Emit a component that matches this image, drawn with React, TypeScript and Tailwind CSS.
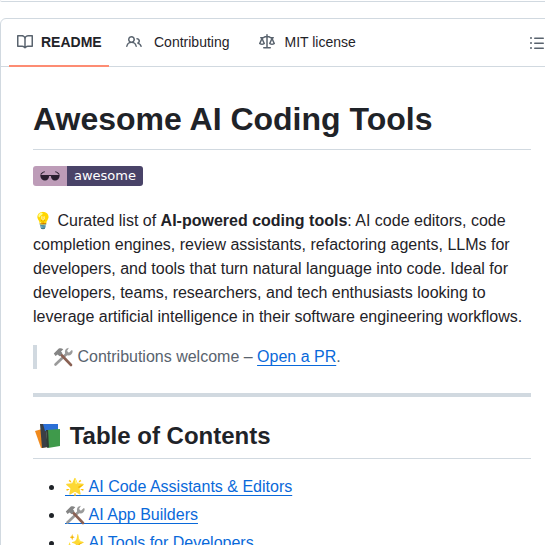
const tabs = [
  {
    label: "README",
    className: "w-[100px] gap-2 border-[#fd8c73] px-2 font-bold",
    path: "M0 1.75A.75.75 0 0 1 .75 1h4.253c1.227 0 2.317.59 3 1.501A3.743 3.743 0 0 1 11.006 1h4.245a.75.75 0 0 1 .75.75v10.5a.75.75 0 0 1-.75.75h-4.507a2.25 2.25 0 0 0-1.591.659l-.622.621a.75.75 0 0 1-1.06 0l-.622-.621A2.25 2.25 0 0 0 5.258 13H.75a.75.75 0 0 1-.75-.75Zm7.251 10.324.004-5.073-.002-2.253A2.25 2.25 0 0 0 5.003 2.5H1.5v9h3.757a3.75 3.75 0 0 1 1.994.574ZM8.755 4.75l-.004 7.322a3.752 3.752 0 0 1 1.992-.572H14.5v-9h-3.495a2.25 2.25 0 0 0-2.25 2.25Z",
  },
  {
    label: "Contributing",
    className: "ml-[17px] gap-3 border-transparent",
    path: "M2 5.5a3.5 3.5 0 1 1 5.898 2.549 5.508 5.508 0 0 1 3.034 4.084.75.75 0 1 1-1.482.235 4 4 0 0 0-7.9 0 .75.75 0 0 1-1.482-.236A5.507 5.507 0 0 1 3.102 8.05 3.493 3.493 0 0 1 2 5.5ZM11 4a3.001 3.001 0 0 1 2.22 5.018 5.01 5.01 0 0 1 2.56 3.012.749.749 0 0 1-.885.954.752.752 0 0 1-.549-.514 3.507 3.507 0 0 0-2.522-2.372.75.75 0 0 1-.574-.73v-.352a.75.75 0 0 1 .416-.672A1.5 1.5 0 0 0 11 5.5.75.75 0 0 1 11 4Zm-5.5-.5a2 2 0 1 0-.001 3.999A2 2 0 0 0 5.5 3.5Z",
  },
  {
    label: "MIT license",
    className: "ml-[29px] gap-2.5 border-transparent",
    path: "M8.75.75V2h.985c.304 0 .603.08.867.231l1.29.736c.038.022.08.033.124.033h2.234a.75.75 0 0 1 0 1.5h-.427l2.111 4.692a.75.75 0 0 1-.154.838l-.53-.53.529.531-.001.002-.002.002-.006.006-.006.005-.01.01-.045.04c-.21.176-.441.327-.686.45C14.556 10.78 13.88 11 13 11a4.498 4.498 0 0 1-2.023-.454 3.544 3.544 0 0 1-.686-.45l-.045-.04-.016-.015-.006-.006-.004-.004v-.001a.75.75 0 0 1-.154-.838L12.178 4.5h-.162c-.305 0-.604-.079-.868-.231l-1.29-.736a.245.245 0 0 0-.124-.033H8.75V13h2.5a.75.75 0 0 1 0 1.5h-6.5a.75.75 0 0 1 0-1.5h2.5V3.5h-.984a.245.245 0 0 0-.124.033l-1.289.737c-.265.15-.564.23-.869.23h-.162l2.112 4.692a.75.75 0 0 1-.154.838l-.53-.53.529.531-.001.002-.002.002-.006.006-.016.015-.045.04c-.21.176-.441.327-.686.45C4.556 10.78 3.88 11 3 11a4.498 4.498 0 0 1-2.023-.454 3.544 3.544 0 0 1-.686-.45l-.045-.04-.016-.015-.006-.006-.004-.004v-.001a.75.75 0 0 1-.154-.838L2.178 4.5H1.75a.75.75 0 0 1 0-1.5h2.234a.249.249 0 0 0 .125-.033l1.288-.737c.265-.15.564-.23.869-.23h.984V.75a.75.75 0 0 1 1.5 0Zm2.945 8.477c.285.135.718.273 1.305.273s1.02-.138 1.305-.273L13 6.327Zm-10 0c.285.135.718.273 1.305.273s1.02-.138 1.305-.273L3 6.327Z",
  },
];

const listPath =
  "M5.75 2.5h8.5a.75.75 0 0 1 0 1.5h-8.5a.75.75 0 0 1 0-1.5Zm0 5h8.5a.75.75 0 0 1 0 1.5h-8.5a.75.75 0 0 1 0-1.5Zm0 5h8.5a.75.75 0 0 1 0 1.5h-8.5a.75.75 0 0 1 0-1.5ZM2 14a1 1 0 1 1 0-2 1 1 0 0 1 0 2Zm1-6a1 1 0 1 1-2 0 1 1 0 0 1 2 0ZM2 4a1 1 0 1 1 0-2 1 1 0 0 1 0 2Z";

const Icon = ({ d }: { d: string }) => (
  <svg viewBox="0 0 16 16" width="16" height="16" fill="#59636e" className="shrink-0">
    <path d={d} />
  </svg>
);

// the system emoji differ from the reference, so the glyph stays as text and the drawing sits over it
const ToolsEmoji = () => (
  <span className="relative text-transparent">
    🛠️
    <svg viewBox="0 0 20 20" width="20" height="20" className="absolute top-1/2 left-0 -translate-y-1/2">
      <path d="M2.500 17.500 14 6.500" stroke="#9a9a9a" strokeWidth="2.600" strokeLinecap="round" />
      <path d="M19.500 3.500c.6 2.600-1.400 5-4 5-2.400 0-4-2-3.500-4.500.3-1.500 1.700-3 3.900-3.200L14 4l1.900 1.700 2.900-2.600Z" fill="#9a9a9a" />
      <path d="M7 6.500 18 18" stroke="#8a6154" strokeWidth="2.600" strokeLinecap="round" />
      <path d="M.8 6.500 5.800 1.500c1.500-.5 3-.3 4.500.7L8 4.500l1.500 1.700-3 3-1.800-1.800-2.200 1.600Z" fill="#858585" />
    </svg>
  </span>
);

const BooksEmoji = () => (
  <span className="relative text-transparent">
    📚
    <svg viewBox="0 0 30 30" width="30" height="30" className="absolute top-1/2 left-0 -translate-y-1/2">
      <path d="M2 10 9 8l5 18-6 1Z" fill="#f08a1d" />
      <path d="M7 3h5l3 23-6 1Z" fill="#3a3f45" />
      <path d="M10 3h15v7H12Z" fill="#2b6fd6" />
      <path d="M14 9l13-1v17l-12 2Z" fill="#3f9a4b" />
      <path d="M13 9h2l1 17-2 1Z" fill="#2f3a33" />
    </svg>
  </span>
);

const AwesomeBadge = () => (
  <div className="flex h-5 w-[110px] overflow-hidden rounded-[3px]">
    <div className="flex w-[34px] items-center justify-center bg-[#bd9cb8]">
      <svg viewBox="0 0 20 10" width="20" height="10" fill="#2a2030">
        <path d="M0 3.500C2 1 3.500.5 5 .5L5 1.200C3.800 1.200 2.600 1.800 1.600 3.500ZM20 3.500C18 1 16.500.5 15 .5L15 1.200C16.200 1.200 17.400 1.800 18.400 3.500Z" />
        <path d="M.5 4h8c.4 0 .7.3.7.7C9 7.500 7.500 9.500 5 9.500S.6 7.500.3 4.700C.3 4.300.3 4 .5 4ZM11.500 4h8c.2 0 .2.3.2.7-.3 2.800-2.200 4.800-4.700 4.800s-4-2-4.200-4.800c0-.4.3-.7.7-.7ZM9 4h2v1H9Z" />
      </svg>
    </div>
    <div className="flex flex-1 items-center justify-center bg-[#494368] font-['DejaVu_Sans'] text-[13px] text-white">
      awesome
    </div>
  </div>
);

const linkClass = "text-[#0969da] underline decoration-[#0969da] underline-offset-[3px]";

export default function App() {
  return (
    <div className="h-[545px] w-[545px] overflow-hidden bg-white font-['Liberation_Sans',sans-serif] text-base text-[#1f2328]">
      <div className="h-[2px] w-[564px] rounded-b-md border-b border-[#d1d9e0]" />
      <div className="mt-4 w-[564px] rounded-md border border-[#d1d9e0]">
        {/* Tabs */}
        <div className="flex h-12 items-center justify-between border-b border-[#d1d9e0] pl-2 pr-[18px]">
          <div className="flex h-full text-sm">
            {tabs.map((tab) => (
              <div key={tab.label} className={`-mb-px flex items-center border-b-2 ${tab.className}`}>
                <Icon d={tab.path} />
                <span>{tab.label}</span>
              </div>
            ))}
          </div>
          <Icon d={listPath} />
        </div>

        {/* Readme */}
        <div className="px-8 pt-8">
          <h1 className="border-b border-[#d1d9e0] pb-[10px] text-[32px] leading-10 font-bold">
            Awesome AI Coding Tools
          </h1>
          <div className="mt-4">
            <AwesomeBadge />
          </div>
          <p className="mt-[23px] leading-6">
            💡 Curated list of <strong>AI-powered coding tools</strong>: AI code editors, code completion engines,
            review assistants, refactoring agents, LLMs for developers, and tools that turn natural language into
            code. Ideal for developers, teams, researchers, and tech enthusiasts looking to leverage artificial
            intelligence in their software engineering workflows.
          </p>
          <blockquote className="mt-4 border-l-4 border-[#d1d9e0] pl-4 leading-6 text-[#59636e]">
            <ToolsEmoji /> Contributions welcome – <a className={linkClass}>Open a PR</a>.
          </blockquote>
          <div className="mt-6 h-1 bg-[#d1d9e0]" />
          <h2 className="mt-6 border-b border-[#d1d9e0] pb-[7px] text-2xl leading-[30px] font-bold">
            <BooksEmoji /> Table of Contents
          </h2>
          <ul className="mt-4 list-disc pl-8 leading-6">
            <li className="mb-1">
              <a className={linkClass}>🌟 AI Code Assistants &amp; Editors</a>
            </li>
            <li className="mb-1">
              <a className={linkClass}>
                <ToolsEmoji /> AI App Builders
              </a>
            </li>
            <li className="mb-1">
              <a className={linkClass}>✨ AI Tools for Developers</a>
            </li>
          </ul>
        </div>
      </div>
    </div>
  );
}
